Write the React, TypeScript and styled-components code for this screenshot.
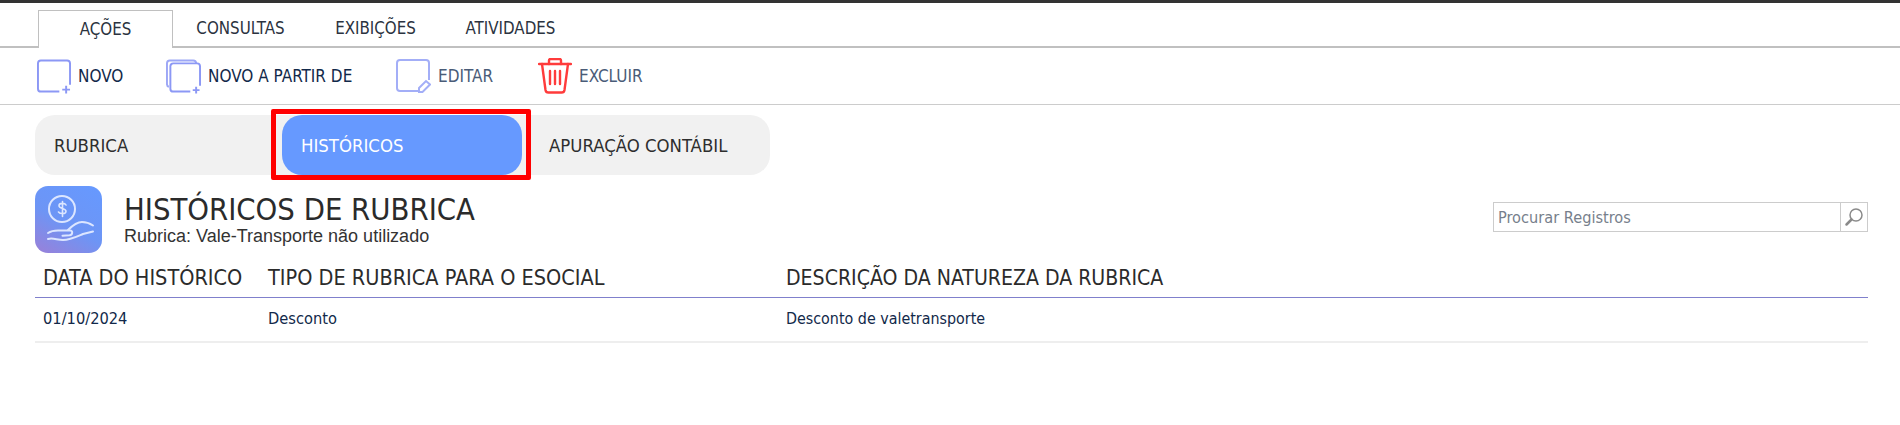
import React from 'react'
import styled, { createGlobalStyle } from 'styled-components'

const GlobalStyle = createGlobalStyle`
  html, body {
    margin: 0;
    padding: 0;
    background: #fff;
    font-family: 'DejaVu Sans Condensed', 'DejaVu Sans', sans-serif;
  }
`

const Page = styled.div`
  width: 1900px;
  height: 425px;
  overflow: hidden;
  border-top: 3px solid #333;
  box-sizing: border-box;
`

const TabBar = styled.div`
  display: flex;
  height: 45px;
  padding: 7px 0 0 38px;
  box-sizing: border-box;
  border-bottom: 2px solid #c0c0c0;
`

const Tab = styled.div<{ $active?: boolean }>`
  width: 135px;
  height: ${({ $active }) => ($active ? '38px' : '36px')};
  padding-bottom: ${({ $active }) => ($active ? '2px' : '0')};
  display: flex;
  align-items: center;
  justify-content: center;
  font-size: 16.8px;
  color: #2b3340;
  box-sizing: border-box;
  background: #fff;
  border: ${({ $active }) => ($active ? '1px solid #c0c0c0' : 'none')};
  border-bottom: none;
`

const Toolbar = styled.div`
  display: flex;
  align-items: center;
  height: 57px;
  padding-left: 37px;
  box-sizing: border-box;
  border-bottom: 1px solid #ccc;
`

const Action = styled.div<{ $width: number; $disabled?: boolean }>`
  display: flex;
  align-items: center;
  gap: 7px;
  width: ${({ $width }) => $width}px;
  font-size: 17px;
  color: ${({ $disabled }) => ($disabled ? '#4a5c78' : '#12294a')};
`

const SubTabs = styled.div`
  position: relative;
  display: flex;
  margin: 10px 0 0 35px;
  width: 735px;
  height: 60px;
  background: #f1f1f1;
  border-radius: 20px;
`

const SubTab = styled.div<{ $active?: boolean; $width: number; $left: number }>`
  width: ${({ $width }) => $width}px;
  margin-left: ${({ $left }) => $left}px;
  height: 60px;
  padding-left: 19px;
  box-sizing: border-box;
  display: flex;
  align-items: center;
  font-size: 18.4px;
  border-radius: 20px;
  color: ${({ $active }) => ($active ? '#fff' : '#2e2e2e')};
  background: ${({ $active }) => ($active ? '#6699ff' : 'transparent')};
`

const Highlight = styled.div`
  position: absolute;
  left: 236px;
  top: -6px;
  width: 260px;
  height: 71px;
  box-sizing: border-box;
  border: 5px solid #ff0000;
  border-radius: 2px;
`

const Header = styled.div`
  display: flex;
  align-items: flex-start;
  margin: 11px 32px 0 35px;
`

const TitleIcon = styled.div`
  width: 67px;
  height: 67px;
  border-radius: 13px;
  background: linear-gradient(30deg, #9a80d8 0%, #6d95f5 45%, #6699ff 100%);
  flex: none;
`

const TitleBlock = styled.div`
  margin-left: 22px;
  flex: 1;
  padding-top: 7px;
`

const Title = styled.div`
  font-size: 30.7px;
  line-height: 33px;
  color: #2b2b2b;
`

const Subtitle = styled.div`
  font-family: 'Liberation Sans', Arial, sans-serif;
  font-size: 18px;
  line-height: 20px;
  color: #333;
`

const SearchBox = styled.div`
  display: flex;
  width: 375px;
  height: 30px;
  margin-top: 16px;
  box-sizing: border-box;
  border: 1px solid #ccc;
`

const SearchText = styled.div`
  flex: 1;
  padding-left: 4px;
  font-size: 16.2px;
  line-height: 29px;
  color: #777f8c;
`

const SearchButton = styled.div`
  width: 26px;
  border-left: 1px solid #ccc;
  display: flex;
  align-items: center;
  justify-content: center;
`

const Table = styled.div`
  margin: 0 32px 0 35px;
`

const Row = styled.div<{ $head?: boolean }>`
  display: grid;
  grid-template-columns: 225px 518px 1fr;
  padding: ${({ $head }) => ($head ? '4px 0 0 8px' : '0 0 2px 8px')};
  align-items: center;
  box-sizing: border-box;
  height: 45px;
  font-size: ${({ $head }) => ($head ? '21.5px' : '16.3px')};
  color: ${({ $head }) => ($head ? '#2b2b2b' : '#12294a')};
  border-bottom: ${({ $head }) => ($head ? '1px solid #8080cc' : '2px solid #eee')};
`

const LongCell = styled.div<{ $head?: boolean }>`
  font-size: ${({ $head }) => ($head ? '21.1px' : '15.9px')};
`

const NewIcon = () => (
  <svg width="34" height="35" viewBox="0 0 35 35" fill="none" stroke="#8c98f5" strokeWidth="2">
    <path d="M23 33H4a3 3 0 0 1-3-3V4a3 3 0 0 1 3-3h27a3 3 0 0 1 3 3v22" />
    <path d="M30 27v8M26 31h8" />
  </svg>
)

const CopyIcon = () => (
  <svg width="35" height="35" viewBox="0 0 36 35" fill="none" stroke="#8c98f5" strokeWidth="2">
    <path d="M3 28a2.500 2.500 0 0 1-2-2.500V4a3 3 0 0 1 3-3h24a3 3 0 0 1 3 3" strokeOpacity=".85" />
    <path d="M25 33H7.500a3 3 0 0 1-3-3V7a3 3 0 0 1 3-3H32a3 3 0 0 1 3 3v20" />
    <path d="M31 28v7M27.500 31.500h7" />
  </svg>
)

const EditIcon = () => (
  <svg width="35" height="35" viewBox="0 0 35 35" fill="none" stroke="#a3aef7" strokeWidth="2">
    <path d="M22 32H4a3 3 0 0 1-3-3V4a3 3 0 0 1 3-3h26a3 3 0 0 1 3 3v17" />
    <path d="M23 29l7-7 4 3.500-7.500 7.500H23z" />
  </svg>
)

const TrashIcon = () => (
  <svg width="34" height="36" viewBox="0 0 34 36" fill="none" stroke="#ff3b3b" strokeWidth="2.400" strokeLinecap="round">
    <path d="M1 6h32" />
    <path d="M11 6V2.500A1.500 1.500 0 0 1 12.500 1h9A1.500 1.500 0 0 1 23 2.500V6" />
    <path d="M4 6l3.500 26a3 3 0 0 0 3 2.500h13a3 3 0 0 0 3-2.500L30 6" />
    <path d="M12 13v13M17 13v13M22 13v13" />
  </svg>
)

const MoneyHandIcon = () => (
  <svg width="67" height="67" viewBox="0 0 67 67" fill="none" stroke="#dce6ff" strokeWidth="2" strokeLinecap="round" strokeLinejoin="round">
    <circle cx="27" cy="23" r="13" />
    <path d="M31 19c-1-2-7-2.500-7 .8 0 3.400 7 2 7 5.400 0 3.200-6 2.800-7.500 .8M27.500 15.500v15" strokeWidth="1.600" />
    <path d="M13 47c3-2 6-2.500 10-2.500h12c3 0 3 4.500-.5 4.800l-7 .4" />
    <path d="M33 44c4-4 9-8 14-8 4 0 8 1.500 11 3.500" />
    <path d="M13 53c5-1.500 9 1 15 1 7 0 14-3.500 20-6l10-2.500" />
  </svg>
)

const SearchIcon = () => (
  <svg width="20" height="20" viewBox="0 0 20 20" fill="none" stroke="#8a8a8a">
    <circle cx="12" cy="8" r="6" strokeWidth="1.500" />
    <path d="M7.500 12.500L2.500 17.500" strokeWidth="2.500" strokeLinecap="round" />
  </svg>
)

const App = () => (
  <Page>
    <GlobalStyle />
    <TabBar>
      <Tab $active>AÇÕES</Tab>
      <Tab>CONSULTAS</Tab>
      <Tab>EXIBIÇÕES</Tab>
      <Tab>ATIVIDADES</Tab>
    </TabBar>
    <Toolbar>
      <Action $width={129}><NewIcon />NOVO</Action>
      <Action $width={230}><CopyIcon />NOVO A PARTIR DE</Action>
      <Action $width={142} $disabled><EditIcon />EDITAR</Action>
      <Action $width={120} $disabled><TrashIcon />EXCLUIR</Action>
    </Toolbar>
    <SubTabs>
      <SubTab $width={247} $left={0}>RUBRICA</SubTab>
      <SubTab $width={240} $active $left={0}>HISTÓRICOS</SubTab>
      <SubTab $width={240} $left={8}>APURAÇÃO CONTÁBIL</SubTab>
      <Highlight />
    </SubTabs>
    <Header>
      <TitleIcon><MoneyHandIcon /></TitleIcon>
      <TitleBlock>
        <Title>HISTÓRICOS DE RUBRICA</Title>
        <Subtitle>Rubrica: Vale-Transporte não utilizado</Subtitle>
      </TitleBlock>
      <SearchBox>
        <SearchText>Procurar Registros</SearchText>
        <SearchButton><SearchIcon /></SearchButton>
      </SearchBox>
    </Header>
    <Table>
      <Row $head>
        <div>DATA DO HISTÓRICO</div>
        <div>TIPO DE RUBRICA PARA O ESOCIAL</div>
        <LongCell $head>DESCRIÇÃO DA NATUREZA DA RUBRICA</LongCell>
      </Row>
      <Row>
        <div>01/10/2024</div>
        <div>Desconto</div>
        <LongCell>Desconto de valetransporte</LongCell>
      </Row>
    </Table>
  </Page>
)

export default App
